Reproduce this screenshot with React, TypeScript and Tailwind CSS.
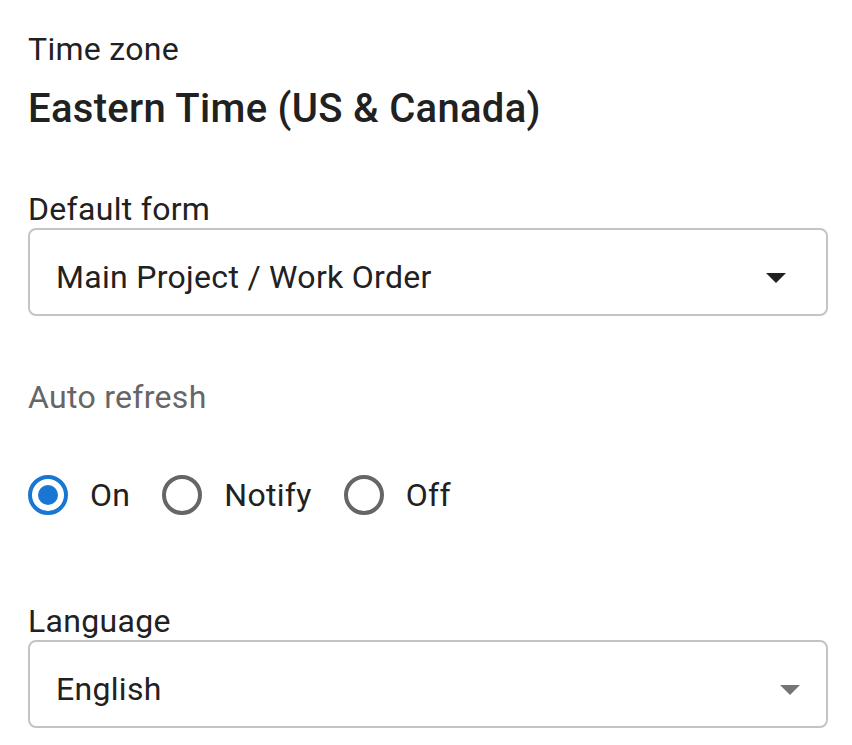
import React from 'react';

const options = [
  { id: 'on', label: 'On' },
  { id: 'notify', label: 'Notify' },
  { id: 'off', label: 'Off' },
];

const Radio: React.FC<{ checked: boolean }> = ({ checked }) => (
  <svg viewBox="0 0 24 24" className="w-[48px] h-[48px] shrink-0">
    <circle
      cx="12"
      cy="12"
      r="9"
      fill="none"
      stroke={checked ? '#1976d2' : '#666666'}
      strokeWidth="2"
    />
    {checked && <circle cx="12" cy="12" r="5" fill="#1976d2" />}
  </svg>
);

const Caret: React.FC<{ color: string; className: string }> = ({ color, className }) => (
  <svg viewBox="0 0 10 5" className={`w-[20px] h-[10px] shrink-0 ${className}`}>
    <path d="M0 0l5 5 5-5z" fill={color} />
  </svg>
);

export default function App() {
  const [refresh, setRefresh] = React.useState('on');

  return (
    <div className="min-h-screen bg-white pl-[28px] pt-[33px] text-[#212121] tracking-[0.3px] font-['Roboto','Liberation_Sans',sans-serif]">
      {/* Time zone */}
      <div className="text-[32px] leading-[32px]">Time zone</div>
      <div className="mt-[24px] text-[40px] leading-[40px] font-medium">Eastern Time (US &amp; Canada)</div>

      {/* Default form */}
      <div className="mt-[64px] text-[32px] leading-[32px]">Default form</div>
      <div className="mt-[3px] w-[800px] h-[88px] flex items-start border-2 border-[#c4c4c4] rounded-[8px]">
        <div className="flex-1 mt-[31px] pl-[26px] text-[32px] leading-[32px]">Main Project / Work Order</div>
        <Caret color="#212121" className="mt-[43px] mr-[40px]" />
      </div>

      {/* Auto refresh */}
      <div className="mt-[65px] text-[32px] leading-[32px] text-[#666666]">Auto refresh</div>
      <div className="mt-[58px] h-[48px] flex items-center -ml-[4px]">
        {options.map((opt) => (
          <button
            key={opt.id}
            onClick={() => setRefresh(opt.id)}
            className="flex items-center mr-[28px]"
          >
            <Radio checked={refresh === opt.id} />
            <span className="ml-[18px] text-[32px] leading-[32px]">{opt.label}</span>
          </button>
        ))}
      </div>

      {/* Language */}
      <div className="mt-[86px] text-[32px] leading-[32px]">Language</div>
      <div className="mt-[3px] w-[800px] h-[88px] flex items-start border-2 border-[#c4c4c4] rounded-[8px]">
        <div className="flex-1 mt-[31px] pl-[26px] text-[32px] leading-[32px]">English</div>
        <Caret color="#757575" className="mt-[43px] mr-[26px]" />
      </div>
    </div>
  );
}
